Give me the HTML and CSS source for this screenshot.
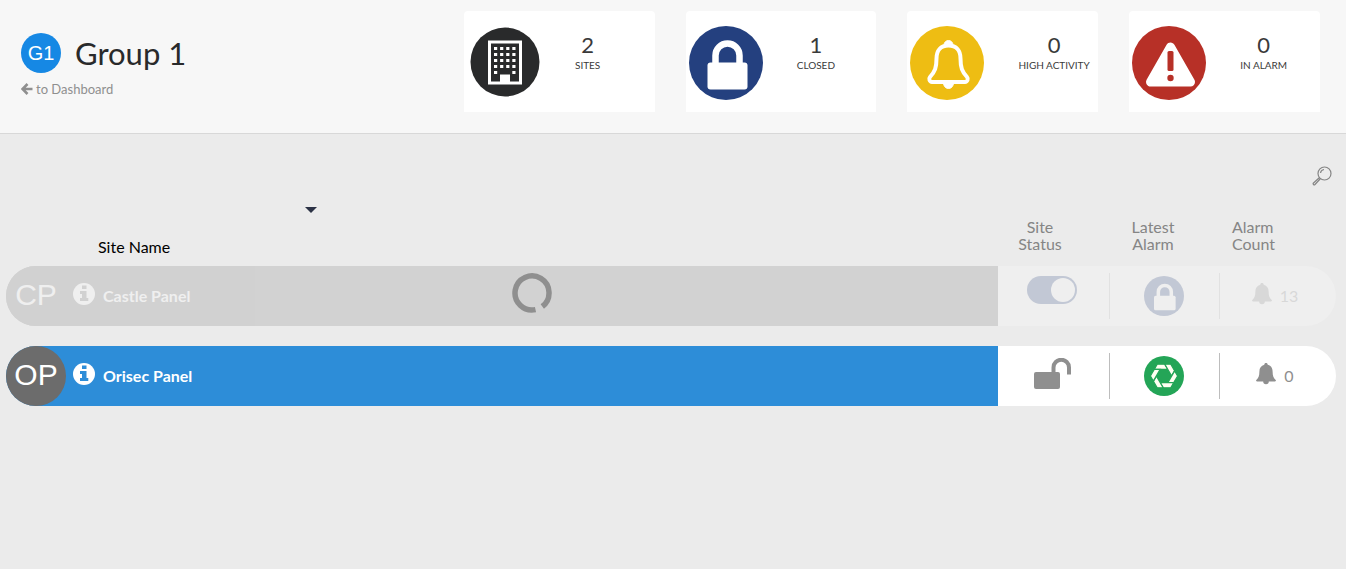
FILE: index.html
```html
<!DOCTYPE html>
<html lang="en">
<head>
  <meta charset="utf-8">
  <meta name="viewport" content="width=device-width, initial-scale=1">
  <title>Group 1</title>
  <link rel="stylesheet" href="styles.css">
</head>
<body>
  <!-- shared icons -->
  <svg class="sprite" aria-hidden="true">
    <symbol id="lock" viewBox="0 0 74 74">
      <circle cx="37" cy="37" r="37" fill="#24407f"/>
      <path d="M26.5 38V29.500a12 12 0 0 1 24 0v8.500" fill="none" stroke="#fff" stroke-width="6.5"/>
      <rect x="18.500" y="36.500" width="40" height="27" rx="3" fill="#fff"/>
    </symbol>
    <symbol id="bell" viewBox="0 0 20 22">
      <path d="M10 0c1 0 1.700.7 1.700 1.700C15 2.500 16.600 5 16.600 8.500c0 4.500 1 6.500 3.100 8.500.5.500.2 1.500-.7 1.500h-6.200a2.800 2.800 0 0 1-5.600 0H1c-.9 0-1.200-1-.7-1.500 2.100-2 3.100-4 3.100-8.500C3.400 5 5 2.500 8.300 1.700 8.300.7 9 0 10 0z" fill="#8f8f8f"/>
    </symbol>
    <symbol id="info" viewBox="0 0 22 22">
      <circle cx="11" cy="11" r="11" fill="#fff"/>
      <path d="M9 2.500h4.500v3.500H9zM7 8h6.500v7h1.800v3H7v-3h2v-4H7z" fill="var(--name-bg)"/>
    </symbol>
  </svg>

  <header class="header">
    <div class="group">
      <div class="group-title">
        <span class="group-avatar">G1</span>
        <h1>Group 1</h1>
      </div>
      <a class="back" href="#">
        <svg width="12" height="12" viewBox="0 0 12 12"><path d="M11.500 6H2M6.500 1 1.500 6l5 5" fill="none" stroke="#8f8f8f" stroke-width="2.600"/></svg>
        to Dashboard
      </a>
    </div>

    <div class="stats">
      <div class="stat">
        <svg class="stat-icon" viewBox="0 0 74 74">
          <circle cx="38" cy="36" r="34.500" fill="#292a2b"/>
          <rect x="22.500" y="16" width="31" height="41" fill="none" stroke="#fff" stroke-width="3"/>
          <path d="M27 22.500h23M27 28.500h23M27 34.500h23M27 40.500h23" stroke="#fff" stroke-width="3.200" stroke-dasharray="3.200 2.900"/>
          <path d="M27 46.500h3.200M45.300 46.500h3.200" stroke="#fff" stroke-width="3.200"/>
          <path d="M33 48.500h10V57H33z" fill="#fff"/>
        </svg>
        <div class="stat-text"><strong>2</strong><span>SITES</span></div>
      </div>
      <div class="stat">
        <svg class="stat-icon"><use href="#lock"/></svg>
        <div class="stat-text"><strong>1</strong><span>CLOSED</span></div>
      </div>
      <div class="stat">
        <svg class="stat-icon" viewBox="0 0 74 74">
          <circle cx="37" cy="37" r="37" fill="#eebd13"/>
          <path d="M38.500 19.500c-8 0-12 5-12 13 0 9-1.500 13-6.500 18.500-1.500 1.800-.5 5 2 5h33c2.500 0 3.500-3.200 2-5-5-5.500-6.500-9.500-6.500-18.500 0-8-4-13-12-13z" fill="none" stroke="#fff" stroke-width="4"/>
          <path d="M34 19a4.500 4.500 0 0 1 9 0zM33.500 57h10a5 5.500 0 0 1-10 0z" fill="#fff" stroke="#fff"/>
        </svg>
        <div class="stat-text"><strong>0</strong><span>HIGH ACTIVITY</span></div>
      </div>
      <div class="stat">
        <svg class="stat-icon" viewBox="0 0 74 74">
          <circle cx="37" cy="37" r="37" fill="#b73027"/>
          <path d="M38.500 21 18.500 56h40z" fill="#fff" stroke="#fff" stroke-width="9" stroke-linejoin="round"/>
          <rect x="35.500" y="25" width="6" height="20" rx="1.500" fill="#b73027"/>
          <circle cx="38.500" cy="52" r="3.200" fill="#b73027"/>
        </svg>
        <div class="stat-text"><strong>0</strong><span>IN ALARM</span></div>
      </div>
    </div>
  </header>

  <main>
    <div class="toolbar">
      <button class="icon-btn" type="button" aria-label="Search">
        <svg width="20" height="20" viewBox="0 0 20 20" fill="none" stroke="#858585" stroke-width="1.200">
          <circle cx="12.500" cy="7.500" r="6.500"/>
          <path d="M8.500 7a4 4 0 0 1 3.500-3.500M7.500 11.500l-6 5.500c-1 1 .5 2.500 1.500 1.500l5.500-6"/>
        </svg>
      </button>
    </div>

    <table class="sites">
      <thead>
        <tr>
          <th class="col-name">
            <button class="icon-btn sort" type="button" aria-label="Sort by site name">
              <svg width="12" height="6" viewBox="0 0 12 6"><path d="M0 0h12L6 6z" fill="#2b3245"/></svg>
            </button>
            Site Name
          </th>
          <th class="col-status">Site<br>Status</th>
          <th class="col-latest">Latest<br>Alarm</th>
          <th class="col-count">Alarm<br>Count</th>
        </tr>
      </thead>
      <tbody>
        <tr class="site busy">
          <td class="name-cell">
            <div class="cell name">
              <span class="avatar">CP</span>
              <svg class="info"><use href="#info"/></svg>
              <span class="site-name">Castle Panel</span>
            </div>
            <svg class="spinner" viewBox="0 0 40 40"><path d="M23.500 36.600A17 17 0 1 1 30.300 33.500" fill="none" stroke="#8f8f8f" stroke-width="5.500"/></svg>
          </td>
          <td><div class="cell status"><input class="toggle" type="checkbox" aria-label="Castle Panel status" checked></div></td>
          <td><div class="cell latest"><svg class="badge"><use href="#lock"/></svg></div></td>
          <td><div class="cell count"><svg class="bell"><use href="#bell"/></svg><span>13</span></div></td>
        </tr>
        <tr class="site">
          <td class="name-cell">
            <div class="cell name">
              <span class="avatar">OP</span>
              <svg class="info"><use href="#info"/></svg>
              <span class="site-name">Orisec Panel</span>
            </div>
          </td>
          <td>
            <div class="cell status">
              <svg width="38" height="32" viewBox="0 0 38 32">
                <rect x="0" y="14" width="26" height="17" rx="2" fill="#8f8f8f"/>
                <path d="M19.500 15V9.500a7.500 7.500 0 0 1 15.500 0V16.500" fill="none" stroke="#8f8f8f" stroke-width="4"/>
              </svg>
            </div>
          </td>
          <td>
            <div class="cell latest">
              <svg class="badge" viewBox="-20 -20 40 40">
                <circle r="20" fill="#24a557"/>
                <g fill="#fffff2" stroke="#24a557" stroke-width="1.300">
                  <path id="blade" d="M-6.800-11.800H.8l3 5.200H-9.800z"/>
                  <use href="#blade" transform="rotate(60)"/>
                  <use href="#blade" transform="rotate(120)"/>
                  <use href="#blade" transform="rotate(180)"/>
                  <use href="#blade" transform="rotate(240)"/>
                  <use href="#blade" transform="rotate(300)"/>
                </g>
              </svg>
            </div>
          </td>
          <td><div class="cell count"><svg class="bell"><use href="#bell"/></svg><span>0</span></div></td>
        </tr>
      </tbody>
    </table>
  </main>
</body>
</html>
```

FILE: styles.css
```css
* {
  box-sizing: border-box;
}

body {
  margin: 0;
  background: #ebebeb;
  color: #858585;
  font-family: Lato, "Open Sans", sans-serif;
  font-size: 16px;
}

svg {
  display: block;
  flex: none;
}

.sprite {
  position: absolute;
  width: 0;
  height: 0;
}

/* header */
.header {
  display: grid;
  grid-template-columns: 341fr 659fr;
  padding: 11px 26px 21px 21px;
  background: #f7f7f7;
  border-bottom: 1px solid #d8d8d8;
}

.group {
  padding-top: 22px;
}

.group-title {
  display: flex;
  align-items: center;
  gap: 14px;
  height: 40px;
}

.group-avatar {
  display: flex;
  align-items: center;
  justify-content: center;
  width: 40px;
  height: 40px;
  border-radius: 50%;
  background: #1688e4;
  color: #fff;
  font-family: "Liberation Sans", Arial, sans-serif;
  font-size: 20px;
}

h1 {
  margin: 0;
  color: #292a2b;
  font-size: 31px;
  font-weight: 400;
  line-height: 40px;
}

.back {
  display: inline-flex;
  align-items: center;
  gap: 3px;
  margin-top: 7px;
  color: #8f8f8f;
  font-size: 13px;
  line-height: 18px;
  text-decoration: none;
}

.stats {
  display: grid;
  grid-template-columns: repeat(4, 1fr);
  gap: 31px;
}

.stat {
  display: flex;
  gap: 34px;
  height: 101px;
  padding: 15px 3px;
  border-radius: 4px 4px 0 0;
  background: #fff;
}

.stat-icon {
  width: 74px;
  height: 74px;
}

.stat-text {
  display: flex;
  flex-direction: column;
  align-items: center;
  padding-top: 5px;
  color: #3a3a3a;
  font-size: 10px;
  line-height: 14px;
  white-space: nowrap;
}

.stat-text strong {
  font-size: 22px;
  font-weight: 400;
  line-height: 27px;
}

/* search */
.toolbar {
  display: flex;
  justify-content: flex-end;
  padding: 32px 14px 21px;
}

.icon-btn {
  display: block;
  padding: 0;
  border: 0;
  background: none;
  cursor: pointer;
}

/* sites */
.sites {
  width: calc(100% - 16px);
  margin: 0 10px 0 6px;
  border-spacing: 0;
  table-layout: fixed;
}

.sites th {
  padding: 0 0 14px;
  font-weight: 400;
  line-height: 17px;
  text-align: center;
  vertical-align: bottom;
}

.sites .col-name {
  padding-bottom: 11px;
  padding-left: 92px;
  color: #000;
  text-align: left;
}

.sort {
  margin: 0 0 25px 23%;
}

.sites .col-status {
  width: 112px;
  padding-right: 28px;
}

.sites .col-latest {
  width: 110px;
  padding-right: 24px;
}

.sites .col-count {
  width: 116px;
  padding-left: 12px;
  text-align: left;
}

.sites td {
  padding: 0 0 20px;
}

.site {
  --name-bg: #2d8dd8;
}

.cell {
  display: flex;
  align-items: center;
  justify-content: center;
  height: 60px;
  background: #fff;
}

.name-cell {
  position: relative;
}

.name {
  justify-content: flex-start;
  border-radius: 30px 0 0 30px;
  background: var(--name-bg);
  color: #fff;
  font-weight: 700;
}

.avatar {
  display: flex;
  align-items: center;
  justify-content: center;
  width: 60px;
  height: 60px;
  padding-bottom: 2px;
  border-radius: 50%;
  background: #6c6c6c;
  font-family: "Liberation Sans", Arial, sans-serif;
  font-size: 30px;
  font-weight: 400;
}

.info {
  width: 22px;
  height: 22px;
  margin: 0 8px 4px 7px;
}

.site-name,
.count span {
  padding-bottom: 2px;
}

.status,
.latest {
  padding-right: 2px;
  background: linear-gradient(#bdbdbd, #bdbdbd) right center / 1px 46px no-repeat #fff;
}

.status svg {
  margin-bottom: 4px;
}

.toggle {
  appearance: none;
  display: flex;
  justify-content: flex-end;
  width: 50px;
  height: 28px;
  margin: 0 2px 12px 0;
  padding: 2px;
  border-radius: 14px;
  background: #24407f;
}

.toggle::before {
  content: "";
  width: 24px;
  height: 24px;
  border-radius: 50%;
  background: #fff;
}

.toggle:not(:checked) {
  justify-content: flex-start;
}

.badge {
  width: 40px;
  height: 40px;
}

.count {
  gap: 8px;
  padding-right: 6px;
  border-radius: 0 30px 30px 0;
  color: #8f8f8f;
  font-size: 16px;
}

.bell {
  width: 20px;
  height: 22px;
  margin-bottom: 4px;
}

/* waiting for the panel to answer */
.busy {
  --name-bg: #6c6c6c;
}

.busy .cell {
  opacity: 0.2;
}

.spinner {
  position: absolute;
  top: 7px;
  left: 51%;
  width: 40px;
  height: 40px;
}
```
